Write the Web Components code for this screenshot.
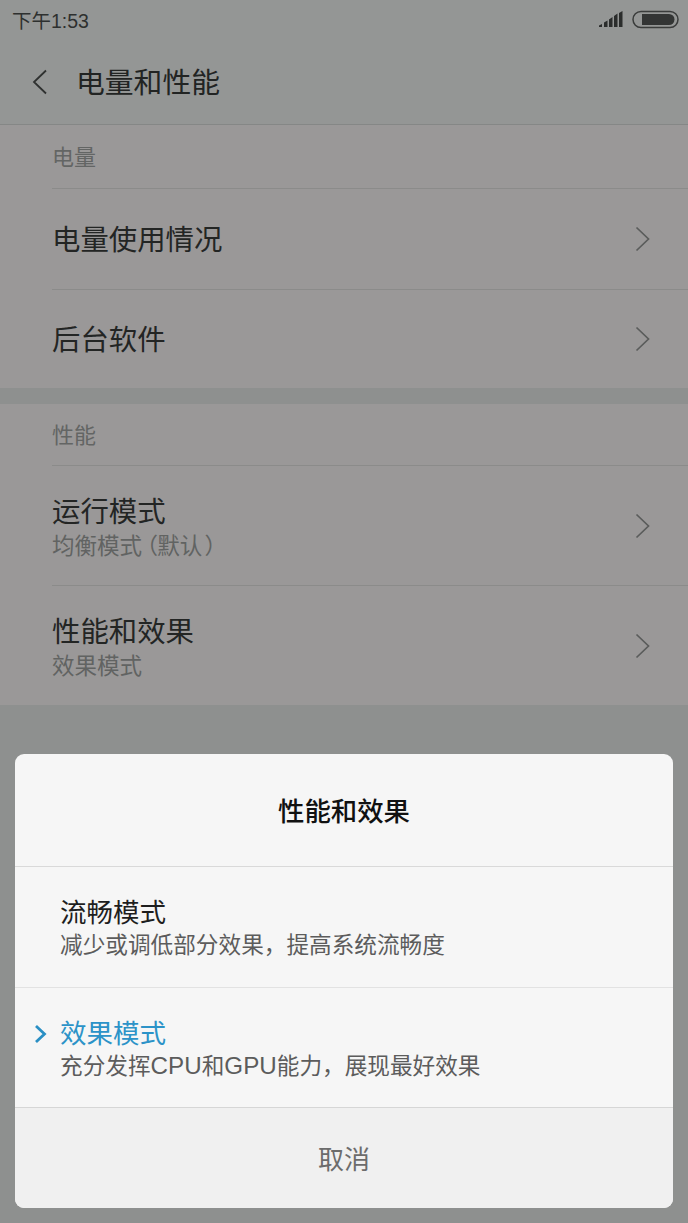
<!DOCTYPE html>
<html lang="zh">
<head>
<meta charset="utf-8">
<title>电量和性能</title>
<style>
  html, body { margin: 0; padding: 0; }
  body {
    width: 688px;
    height: 1223px;
    overflow: hidden;
    background: #8e908f;
    font-family: "Liberation Sans", "Noto Sans CJK SC", sans-serif;
    position: relative;
  }
</style>
</head>
<body>
<status-bar time="下午1:53"></status-bar>
<title-bar text="电量和性能"></title-bar>

<settings-group label="电量" style="height:263px;--label-height:64px">
  <settings-row text="电量使用情况" height="101"></settings-row>
  <settings-row text="后台软件" height="98" last></settings-row>
</settings-group>
<settings-group label="性能" style="height:301px;margin-top:16px;--label-height:62px">
  <settings-row text="运行模式" sub="均衡模式（默认）" height="120"></settings-row>
  <settings-row text="性能和效果" sub="效果模式" height="119" last></settings-row>
</settings-group>

<mode-dialog heading="性能和效果" cancel="取消">
  <mode-option text="流畅模式" sub="减少或调低部分效果，提高系统流畅度" style="height:121px"></mode-option>
  <mode-option text="效果模式" sub="充分发挥CPU和GPU能力，展现最好效果" selected style="height:119px"></mode-option>
</mode-dialog>

<script>
// the screenshot's font has wider latin and tighter brackets than Noto, so wrap those bits
function subMarkup(text) {
  return text
    .replace(/[A-Z]+/g, '<span class="lat">$&</span>')
    .replace('（', '<span class="lp">（</span>')
    .replace('）', '<span class="rp">）</span>');
}

class StatusBar extends HTMLElement {
  constructor() {
    super();
    this.attachShadow({ mode: 'open' });
    this.shadowRoot.innerHTML = `
      <style>
        :host {
          display: flex;
          align-items: center;
          justify-content: space-between;
          height: 43px;
          box-sizing: border-box;
          padding: 0 9px 4px 12px;
          background: #949695;
          color: #2e302f;
          font-size: 19.500px;
        }
        .icons { display: flex; align-items: center; gap: 9px; }
        svg { display: block; }
      </style>
      <span></span>
      <div class="icons">
        <svg width="24" height="17" viewBox="0 0 24 17">
          <path fill="#2b2d2c" d="M0 14.500 3 13v3H0zM5 11.500l3.500-2V16H5zM10 8.500l3.500-2.500V16H10zM15 5l3.500-2.500V16H15zM20 2l3.500-2V16H20z"/>
        </svg>
        <svg width="47" height="19" viewBox="0 0 47 19">
          <rect x="1" y="1.500" width="45" height="16" rx="8" fill="none" stroke="#3a3c3b" stroke-width="1.500"/>
          <path fill="#333534" d="M10 4h27a5.500 5.500 0 0 1 0 11H10z"/>
        </svg>
      </div>
    `;
    this.shadowRoot.querySelector('span').textContent = this.getAttribute('time');
  }
}

class TitleBar extends HTMLElement {
  constructor() {
    super();
    this.attachShadow({ mode: 'open' });
    this.shadowRoot.innerHTML = `
      <style>
        :host {
          display: flex;
          align-items: center;
          height: 82px;
          box-sizing: border-box;
          padding: 0 0 6px 32px;
          gap: 29px;
          background: #949695;
          border-bottom: 1px solid #858786;
          color: #222423;
          font-size: 28.800px;
        }
        svg { display: block; flex: none; position: relative; top: 1px; }
      </style>
      <svg width="15" height="26" viewBox="0 0 15 26">
        <path d="M14 1.500 2 13l12 11.500" fill="none" stroke="#2f3130" stroke-width="1.800"/>
      </svg>
      <span></span>
    `;
    this.shadowRoot.querySelector('span').textContent = this.getAttribute('text');
  }
}

class SettingsGroup extends HTMLElement {
  constructor() {
    super();
    this.attachShadow({ mode: 'open' });
    this.shadowRoot.innerHTML = `
      <style>
        :host {
          display: block;
          box-sizing: border-box;
          background: #9a9898;
        }
        .label {
          display: flex;
          align-items: center;
          height: var(--label-height, 63px);
          margin-left: 52px;
          padding-bottom: 4px;
          box-sizing: border-box;
          border-bottom: 1px solid #8b8b8a;
          color: #636564;
          font-size: 22px;
        }
      </style>
      <div class="label"></div>
      <slot></slot>
    `;
    this.shadowRoot.querySelector('.label').textContent = this.getAttribute('label');
  }
}

class SettingsRow extends HTMLElement {
  constructor() {
    super();
    this.attachShadow({ mode: 'open' });
    this.shadowRoot.innerHTML = `
      <style>
        :host {
          display: flex;
          align-items: center;
          justify-content: space-between;
          box-sizing: border-box;
          margin-left: 52px;
          padding-right: 38px;
          border-bottom: 1px solid #8b8b8a;
        }
        :host([last]) { border-bottom: none; }
        .text { padding-top: 2px; }
        :host([sub]) .text { padding-top: 4px; }
        .main { color: #232524; font-size: 28.400px; line-height: 36px; }
        .sub { color: #616362; font-size: 22.500px; line-height: 30px; margin-top: 2px; }
        .sub:empty { display: none; }
        .lp, .rp { font-feature-settings: "palt"; }
        .lp { padding-left: 4px; }
        .rp { padding-left: 3px; }
        svg { display: block; flex: none; }
      </style>
      <div class="text">
        <div class="main"></div>
        <div class="sub"></div>
      </div>
      <svg width="15" height="26" viewBox="0 0 15 26">
        <path d="M1.500 1.500 13.500 13 1.500 24.500" fill="none" stroke="#5a5c5b" stroke-width="1.700"/>
      </svg>
    `;
    this.shadowRoot.querySelector('.main').textContent = this.getAttribute('text');
    this.shadowRoot.querySelector('.sub').innerHTML = subMarkup(this.getAttribute('sub') || '');
    this.style.height = this.getAttribute('height') + 'px';
  }
}

class ModeDialog extends HTMLElement {
  constructor() {
    super();
    this.attachShadow({ mode: 'open' });
    this.shadowRoot.innerHTML = `
      <style>
        :host {
          display: block;
          position: absolute;
          left: 15px;
          top: 754px;
          width: 658px;
          border-radius: 9px;
          overflow: hidden;
          background: #f6f6f6;
        }
        .heading {
          display: flex;
          align-items: center;
          justify-content: center;
          height: 113px;
          padding-bottom: 2px;
          box-sizing: border-box;
          border-bottom: 1px solid #d9d9d9;
          color: #111;
          font-size: 26.400px;
          font-weight: 500;
        }
        .cancel {
          display: flex;
          align-items: center;
          justify-content: center;
          height: 101px;
          padding-bottom: 2px;
          box-sizing: border-box;
          border-top: 1px solid #d6d6d6;
          background: #f0f0f0;
          color: #6c6c6c;
          font-size: 26px;
        }
      </style>
      <div class="heading"></div>
      <slot></slot>
      <div class="cancel"></div>
    `;
    this.shadowRoot.querySelector('.heading').textContent = this.getAttribute('heading');
    this.shadowRoot.querySelector('.cancel').textContent = this.getAttribute('cancel');
  }
}

class ModeOption extends HTMLElement {
  constructor() {
    super();
    this.attachShadow({ mode: 'open' });
    this.shadowRoot.innerHTML = `
      <style>
        :host {
          display: flex;
          flex-direction: column;
          justify-content: center;
          position: relative;
          box-sizing: border-box;
          padding: 3px 0 0 45px;
          border-bottom: 1px solid #e2e2e2;
        }
        :host([selected]) { padding-top: 5px; border-bottom: none; }
        .main { color: #1e1e1e; font-size: 26.500px; line-height: 32px; }
        .sub { color: #5c5c5c; font-size: 22.650px; line-height: 32px; }
        .lat { font-size: 24.200px; }
        :host([selected]) .main { color: #2c93c8; }
        svg { display: none; position: absolute; left: 19px; top: 36px; }
        :host([selected]) svg { display: block; }
      </style>
      <svg width="13" height="20" viewBox="0 0 13 20">
        <path d="M2 2 10.500 10 2 18" fill="none" stroke="#2a8fc4" stroke-width="2.800"/>
      </svg>
      <div class="main"></div>
      <div class="sub"></div>
    `;
    this.shadowRoot.querySelector('.main').textContent = this.getAttribute('text');
    this.shadowRoot.querySelector('.sub').innerHTML = subMarkup(this.getAttribute('sub'));
  }
}

customElements.define('status-bar', StatusBar);
customElements.define('title-bar', TitleBar);
customElements.define('settings-group', SettingsGroup);
customElements.define('settings-row', SettingsRow);
customElements.define('mode-dialog', ModeDialog);
customElements.define('mode-option', ModeOption);
</script>
</body>
</html>
